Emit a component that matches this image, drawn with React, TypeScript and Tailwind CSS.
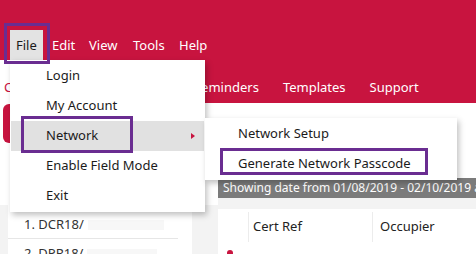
import React from 'react';

const menuItems = [
  { label: 'File', w: 'w-[36px]' },
  { label: 'Edit', w: 'w-[37px]' },
  { label: 'View', w: 'w-[44px]' },
  { label: 'Tools', w: 'w-[46px]' },
  { label: 'Help', w: 'w-[40px]' },
];
const fileItems = ['Login', 'My Account', 'Network', 'Enable Field Mode', 'Exit'];

export default function App() {
  return (
    <div
      className="relative w-[476px] h-[254px] overflow-hidden bg-white text-[#1b1b1b]"
      style={{ fontFamily: '"Segoe UI", "Noto Sans", "Open Sans", sans-serif' }}
    >
      {/* Title + menu bar */}
      <div className="bg-[#c8143f]">
        <div className="flex h-[60px] items-end pl-[10px]">
          {menuItems.map((m, i) => (
            <div
              key={m.label}
              className={
                i === 0
                  ? 'flex h-[30px] w-[33px] items-center bg-[#e3e3e3] pl-[6px] pt-[2px] text-[13px] text-[#1b1b1b] mr-[3px]'
                  : `flex h-[30px] ${m.w} items-center pl-[6px] pt-[2px] text-[13px] text-white`
              }
            >
              {m.label}
            </div>
          ))}
        </div>

        {/* Tabs */}
        <div className="flex h-[43px] items-stretch text-[13px]">
          <div className="flex w-[96px] items-center bg-white pl-[4px] pt-[12px] text-[#c8143f]">Certificates</div>
          <div className="flex w-[85px] items-center pl-[12px] pt-[12px] text-white">Properties</div>
          <div className="flex items-center px-[12px] pt-[12px] text-white">Reminders</div>
          <div className="flex items-center px-[12px] pt-[12px] text-white">Templates</div>
          <div className="flex items-center px-[12px] pt-[12px] text-white">Support</div>
        </div>
      </div>

      {/* Body */}
      <div className="flex h-[151px]">
        <div className="flex w-[218px] shrink-0 flex-col">
          <div className="h-[102px] shrink-0 bg-white pl-[3px] pt-[1px]">
            <div className="h-[39px] w-[130px] rounded-md bg-[#c8143f]" />
          </div>
          <div className="flex-1 overflow-hidden bg-[#f3f3f3] pl-[8px] pr-[26px]">
            <div className="h-full bg-white">
              <div className="mr-[14px] flex h-[34px] items-center border-b border-[#e6e6e6] pl-[16px] pt-[6px] text-[13px] text-[#333]">
                <span>1. DCR18/</span>
                <span className="ml-[4px] h-[10px] w-[76px] bg-[#f7f7f7]" />
              </div>
              <div className="flex h-[30px] items-center pl-[16px] text-[13px] text-[#333]">
                <span>2. DPR18/</span>
                <span className="ml-[4px] h-[10px] w-[70px] bg-[#f7f7f7]" />
              </div>
            </div>
          </div>
        </div>

        <div className="flex min-w-0 flex-1 flex-col overflow-hidden">
          <div className="h-[75px] shrink-0 bg-white" />
          <div className="flex h-[20px] shrink-0 items-center overflow-hidden rounded-tl-[3px] bg-[#7b7b7b] pl-[5px] text-[12px] whitespace-nowrap text-white">
            Showing date from 01/08/2019 - 02/10/2019 and all properties
          </div>
          <div className="flex-1 bg-[#f3f3f3] pt-[11px]">
            <div className="h-full bg-white">
              <div className="flex h-[36px] items-center text-[13px] text-[#222]">
                <div className="h-[30px] w-[31px] border-r border-[#ececec]" />
                <div className="flex h-[30px] w-[124px] items-center border-r border-[#ececec] pl-[4px]">
                  Cert Ref
                </div>
                <div className="pl-[7px]">Occupier</div>
              </div>
              <div className="ml-[9px] mt-[5px] h-[6px] w-[6px] rounded-full bg-[#c8143f]" />
            </div>
          </div>
        </div>
      </div>

      {/* File dropdown */}
      <div className="absolute left-[10px] top-[60px] w-[195px] bg-white py-[1px] shadow-[2px_3px_6px_rgba(0,0,0,0.25)]">
        {fileItems.map((f) => (
          <div
            key={f}
            className={
              f === 'Network'
                ? 'relative mx-[1px] flex h-[30px] items-center bg-[#e1e1e1] pl-[35px] text-[13px]'
                : 'flex h-[30px] items-center pl-[36px] text-[13px]'
            }
          >
            {f}
            {f === 'Network' && (
              <span className="absolute right-[9px] top-[12px] h-0 w-0 border-y-[3.5px] border-l-[4px] border-y-transparent border-l-[#c8143f]" />
            )}
          </div>
        ))}
      </div>

      {/* Network submenu */}
      <div className="absolute left-[205px] top-[118px] w-[252px] bg-white py-[1px] shadow-[2px_3px_6px_rgba(0,0,0,0.25)]">
        <div className="flex h-[30px] items-center pl-[33px] text-[13px]">Network Setup</div>
        <div className="flex h-[30px] items-center pl-[33px] text-[13px]">Generate Network Passcode</div>
      </div>

      {/* Annotation boxes */}
      <div className="absolute left-[4px] top-[23px] h-[41px] w-[46px] border-[3px] border-[#6a2d91]" />
      <div className="absolute left-[21px] top-[116px] h-[37px] w-[112px] border-[3px] border-[#6a2d91]" />
      <div className="absolute left-[220px] top-[148px] h-[27px] w-[208px] border-[3px] border-[#6a2d91]" />
    </div>
  );
}
